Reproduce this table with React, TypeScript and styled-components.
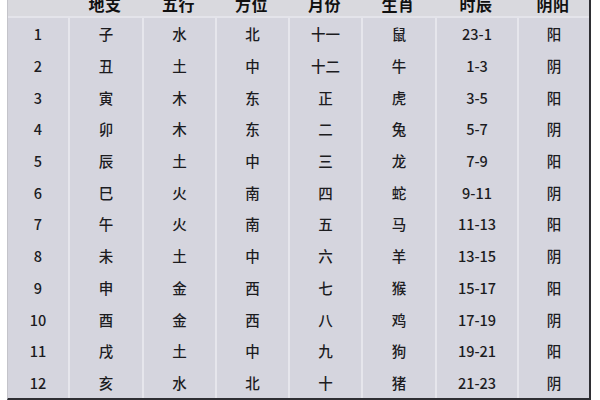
import React from "react";
import styled, { createGlobalStyle } from "styled-components";

const Global = createGlobalStyle`
  html, body { margin: 0; padding: 0; background: #ffffff; overflow: hidden; }
  body { width: 600px; height: 400px; font-family: "Noto Sans CJK SC", "Noto Sans", sans-serif; }
`;

const COLS = "60px 74px 73px 73px 73px 74px 82px 72px";

const Page = styled.div`
  width: 600px;
  height: 400px;
  overflow: hidden;
  padding-left: 7px;
  box-sizing: border-box;
`;

const Table = styled.div`
  width: 584px;
  margin-top: -8px;
  display: flex;
  flex-direction: column;
  border-left: 1px solid #c4c4ca;
  border-right: 2px solid #2e2e33;
  border-bottom: 2px solid #2e2e33;
  background: #d5d5de;
  box-sizing: border-box;
`;

const HeaderRow = styled.div`
  display: grid;
  grid-template-columns: ${COLS};
  height: 26px;
  background: #d9d9de;
  border-bottom: 2px solid #e4e4ea;
  box-sizing: border-box;
`;

const HeadCell = styled.div`
  display: flex;
  align-items: center;
  justify-content: center;
  font-size: 16px;
  line-height: 16px;
  font-weight: 700;
  color: #111;
  letter-spacing: 0.5px;
`;

const Body = styled.div`
  display: flex;
  flex-direction: column;
`;

const Row = styled.div`
  display: grid;
  grid-template-columns: ${COLS};
  height: 31.7px;
`;

const Cell = styled.div<{ $first?: boolean }>`
  display: flex;
  align-items: center;
  justify-content: center;
  font-size: 14.5px;
  font-weight: 500;
  color: #1c1c1f;
  border-left: ${(p) => (p.$first ? "none" : "2px solid #e6e6ec")};
  box-sizing: border-box;
`;

const headers = ["", "地支", "五行", "方位", "月份", "生肖", "时辰", "阴阳"];

const rows: string[][] = [
  ["1", "子", "水", "北", "十一", "鼠", "23-1", "阳"],
  ["2", "丑", "土", "中", "十二", "牛", "1-3", "阴"],
  ["3", "寅", "木", "东", "正", "虎", "3-5", "阳"],
  ["4", "卯", "木", "东", "二", "兔", "5-7", "阴"],
  ["5", "辰", "土", "中", "三", "龙", "7-9", "阳"],
  ["6", "巳", "火", "南", "四", "蛇", "9-11", "阴"],
  ["7", "午", "火", "南", "五", "马", "11-13", "阳"],
  ["8", "未", "土", "中", "六", "羊", "13-15", "阴"],
  ["9", "申", "金", "西", "七", "猴", "15-17", "阳"],
  ["10", "酉", "金", "西", "八", "鸡", "17-19", "阴"],
  ["11", "戌", "土", "中", "九", "狗", "19-21", "阳"],
  ["12", "亥", "水", "北", "十", "猪", "21-23", "阴"],
];

export default function App() {
  return (
    <>
      <Global />
      <Page>
        <Table>
          <HeaderRow>
            {headers.map((h, i) => (
              <HeadCell key={i}>{h}</HeadCell>
            ))}
          </HeaderRow>
          <Body>
            {rows.map((r, ri) => (
              <Row key={ri}>
                {r.map((c, ci) => (
                  <Cell key={ci} $first={ci === 0}>
                    {c}
                  </Cell>
                ))}
              </Row>
            ))}
          </Body>
        </Table>
      </Page>
    </>
  );
}
